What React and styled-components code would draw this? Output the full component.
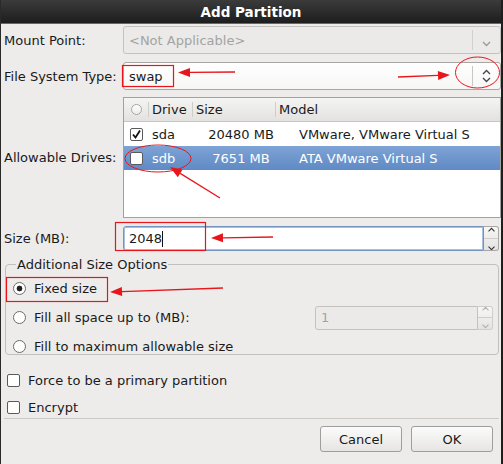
import React from 'react';
import styled, { createGlobalStyle } from 'styled-components';

const GlobalStyle = createGlobalStyle`
  html, body {
    margin: 0;
    padding: 0;
    background: #edeceb;
  }
  body {
    font-family: "DejaVu Sans", "Liberation Sans", sans-serif;
    font-size: 13px;
    color: #1a1a1a;
  }
`;

const drives = [
  { checked: true, drive: 'sda', size: '20480 MB', model: 'VMware, VMware Virtual S' },
  { checked: false, drive: 'sdb', size: '7651 MB', model: 'ATA VMware Virtual S', selected: true },
];

const Chevron = ({ up = true, down = true, color = '#444' }) => (
  <svg width="9" height="14" viewBox="0 0 9 14">
    {up && <path d="M1 5 L4.5 1.5 L8 5" fill="none" stroke={color} strokeWidth="1.3" />}
    {down && <path d="M1 9 L4.5 12.5 L8 9" fill="none" stroke={color} strokeWidth="1.3" />}
  </svg>
);

const Tick = () => (
  <svg width="11" height="11" viewBox="0 0 11 11">
    <path d="M2 5.5 L4.5 8.5 L9 1.5" fill="none" stroke="#111" strokeWidth="1.8" />
  </svg>
);

const Arrow = ({ x1, y1, x2, y2 }) => {
  const a = Math.atan2(y2 - y1, x2 - x1);
  const len = 12;
  const w = 4.5;
  const bx = x2 - len * Math.cos(a);
  const by = y2 - len * Math.sin(a);
  const px = -Math.sin(a) * w;
  const py = Math.cos(a) * w;
  return (
    <g>
      <line x1={x1} y1={y1} x2={bx} y2={by} stroke="#e8151b" strokeWidth="1.3" />
      <polygon points={`${x2},${y2} ${bx + px},${by + py} ${bx - px},${by - py}`} fill="#e8151b" />
    </g>
  );
};

const App = () => {
  return (
    <Window>
      <GlobalStyle />
      <TitleBar>Add Partition</TitleBar>
      <Body>
        <FormRow $top={2}>
          <Label>Mount Point:</Label>
          <Combo $disabled>
            <ComboText $disabled>&lt;Not Applicable&gt;</ComboText>
            <ComboButton $disabled>
              <Chevron up={false} color="#9a9a9a" />
            </ComboButton>
          </Combo>
        </FormRow>

        <FormRow $top={8}>
          <Label>File System Type:</Label>
          <Combo>
            <ComboText>swap</ComboText>
            <ComboButton>
              <Chevron />
            </ComboButton>
          </Combo>
        </FormRow>

        <FormRow $top={7}>
          <Label>Allowable Drives:</Label>
          <Table>
            <HeaderRow>
              <CheckCell>
                <RoundBox />
              </CheckCell>
              <HeadCell $w={44}>Drive</HeadCell>
              <HeadCell $w={83}>Size</HeadCell>
              <HeadCell $grow>Model</HeadCell>
            </HeaderRow>
            {drives.map((d) => (
              <DataRow key={d.drive} $selected={d.selected}>
                <CheckCell>
                  <CheckBox>{d.checked && <Tick />}</CheckBox>
                </CheckCell>
                <Cell $w={44} $pad={4}>{d.drive}</Cell>
                <Cell $w={83} $pad={15} $center>{d.size}</Cell>
                <Cell $grow $pad={24}>{d.model}</Cell>
              </DataRow>
            ))}
          </Table>
        </FormRow>

        <FormRow $top={8}>
          <Label>Size (MB):</Label>
          <SpinWrap>
            <SpinEntry $focus>
              2048<Caret />
            </SpinEntry>
            <SpinButtons>
              <SpinBtn><Chevron down={false} color="#333" /></SpinBtn>
              <SpinBtn><Chevron up={false} color="#333" /></SpinBtn>
            </SpinButtons>
          </SpinWrap>
        </FormRow>

        <Frame>
          <Legend>Additional Size Options</Legend>
          <OptionRow>
            <Radio $on />
            <OptionText>Fixed size</OptionText>
          </OptionRow>
          <OptionRow>
            <Radio />
            <OptionText>Fill all space up to (MB):</OptionText>
            <SmallSpin>
              <SpinEntry $disabled>1</SpinEntry>
              <SpinButtons $disabled>
                <SpinBtn><Chevron down={false} color="#b0b0b0" /></SpinBtn>
                <SpinBtn><Chevron up={false} color="#b0b0b0" /></SpinBtn>
              </SpinButtons>
            </SmallSpin>
          </OptionRow>
          <OptionRow>
            <Radio />
            <OptionText>Fill to maximum allowable size</OptionText>
          </OptionRow>
        </Frame>

        <CheckRow $top={16}>
          <CheckBox />
          <OptionText>Force to be a primary partition</OptionText>
        </CheckRow>
        <CheckRow $top={9}>
          <CheckBox />
          <OptionText>Encrypt</OptionText>
        </CheckRow>

        <Separator />

        <ButtonBar>
          <Button>Cancel</Button>
          <Button>OK</Button>
        </ButtonBar>
      </Body>

      <Annotations width="503" height="464" viewBox="0 0 503 464">
        <rect x="122.5" y="65.5" width="51" height="21" fill="none" stroke="#e8151b" strokeWidth="1.2" />
        <Arrow x1={235} y1={72} x2={178} y2={72.5} />
        <Arrow x1={398} y1={77} x2={450} y2={75} />
        <ellipse cx="477.5" cy="72.5" rx="22" ry="15.5" fill="none" stroke="#e8151b" strokeWidth="1" />
        <ellipse cx="158" cy="158.5" rx="33" ry="13.5" fill="none" stroke="#e8151b" strokeWidth="1" />
        <Arrow x1={220} y1={198} x2={170} y2={167} />
        <rect x="115.5" y="222.5" width="90" height="28" fill="none" stroke="#e8151b" strokeWidth="1.2" />
        <Arrow x1={273} y1={237} x2={211} y2={238} />
        <rect x="6.5" y="277.5" width="101" height="24" fill="none" stroke="#e8151b" strokeWidth="1.2" />
        <Arrow x1={223} y1={288} x2={110} y2={292} />
      </Annotations>
    </Window>
  );
};

export default App;

const Window = styled.div`
  position: relative;
  width: 503px;
  height: 464px;
  box-sizing: border-box;
  background: #edeceb;
  border-left: 1px solid #2a2a2a;
  border-right: 2px solid #1e1e1e;
  overflow: hidden;
`;

const TitleBar = styled.div`
  height: 23px;
  line-height: 24px;
  text-align: center;
  color: #fff;
  font-weight: bold;
  font-size: 13.5px;
  background: linear-gradient(#3b3b3b, #1d1d1d);
  border-bottom: 1px solid #5f6873;
`;

const Body = styled.div`
  display: flex;
  flex-direction: column;
  padding: 0 0 0 3px;
`;

const FormRow = styled.div`
  display: grid;
  grid-template-columns: 119px 1fr;
  align-items: center;
  margin-top: ${(p) => p.$top}px;
`;

const Label = styled.div`
  white-space: nowrap;
`;

const Combo = styled.div`
  display: flex;
  align-items: stretch;
  height: 26px;
  border: 1px solid ${(p) => (p.$disabled ? '#c4c2bf' : '#a9a7a4')};
  border-radius: 3px;
  background: ${(p) => (p.$disabled ? '#ebeae8' : 'linear-gradient(#ffffff, #f6f6f5)')};
`;

const ComboText = styled.div`
  flex: 1;
  display: flex;
  align-items: center;
  padding-left: 5px;
  color: ${(p) => (p.$disabled ? '#a3a3a3' : '#1a1a1a')};
`;

const ComboButton = styled.div`
  width: 27px;
  display: flex;
  align-items: center;
  justify-content: center;
  margin: 3px 0;
  border-left: 1px solid ${(p) => (p.$disabled ? '#d2d0cd' : '#c9c7c4')};
`;

const Table = styled.div`
  height: 119px;
  border: 1px solid #a3a19e;
  background: #fff;
  display: flex;
  flex-direction: column;
`;

const HeaderRow = styled.div`
  display: flex;
  height: 23px;
  background: linear-gradient(#f4f4f3, #e3e2e0);
  border-bottom: 1px solid #c8c6c3;
`;

const CheckCell = styled.div`
  width: 24px;
  display: flex;
  align-items: center;
  justify-content: center;
`;

const HeadCell = styled.div`
  display: flex;
  align-items: center;
  width: ${(p) => (p.$grow ? 'auto' : `${p.$w}px`)};
  flex: ${(p) => (p.$grow ? 1 : 'none')};
  padding-left: 3px;
  box-sizing: border-box;
  border-left: 1px solid #cfcdca;
  margin: 4px 0;
`;

const DataRow = styled.div`
  display: flex;
  height: 24px;
  color: ${(p) => (p.$selected ? '#fff' : '#1a1a1a')};
  background: ${(p) => (p.$selected ? 'linear-gradient(#7ea3d5, #5f8ac5)' : 'transparent')};
`;

const Cell = styled.div`
  display: flex;
  align-items: center;
  justify-content: ${(p) => (p.$center ? 'center' : 'flex-start')};
  width: ${(p) => (p.$grow ? 'auto' : `${p.$w}px`)};
  flex: ${(p) => (p.$grow ? 1 : 'none')};
  padding-left: ${(p) => p.$pad || 0}px;
  box-sizing: border-box;
  white-space: nowrap;
  overflow: ${(p) => (p.$grow ? 'hidden' : 'visible')};
`;

const RoundBox = styled.div`
  width: 9px;
  height: 9px;
  border: 1px solid #a8a6a3;
  border-radius: 50%;
  background: linear-gradient(#fff, #ececec);
`;

const CheckBox = styled.div`
  width: 11px;
  height: 11px;
  border: 1px solid #5a5a5a;
  border-radius: 2px;
  background: #fff;
  display: flex;
  align-items: center;
  justify-content: center;
  flex: none;
`;

const SpinWrap = styled.div`
  display: flex;
  height: 25px;
  margin-right: 2px;
`;

const SpinEntry = styled.div`
  flex: 1;
  display: flex;
  align-items: center;
  padding-left: 5px;
  border: 1px solid ${(p) => (p.$focus ? '#7393c1' : '#c4c2bf')};
  border-radius: 3px 0 0 3px;
  background: ${(p) => (p.$disabled ? '#ebeae8' : '#fff')};
  color: ${(p) => (p.$disabled ? '#a3a3a3' : '#1a1a1a')};
  box-shadow: ${(p) => (p.$focus ? 'inset 0 0 0 1px #a9c0e0' : 'none')};
`;

const Caret = styled.span`
  display: inline-block;
  width: 1px;
  height: 16px;
  background: #111;
`;

const SpinButtons = styled.div`
  width: 14px;
  display: flex;
  flex-direction: column;
  border: 1px solid ${(p) => (p.$disabled ? '#cfcdca' : '#a9a7a4')};
  border-left: none;
  border-radius: 0 3px 3px 0;
  background: linear-gradient(#f7f7f6, #e4e3e1);
`;

const SpinBtn = styled.div`
  flex: 1;
  display: flex;
  align-items: center;
  justify-content: center;
  overflow: hidden;
  & + & {
    border-top: 1px solid #cfcdca;
  }
  svg {
    transform: scale(0.85);
  }
`;

const Frame = styled.fieldset`
  margin: 6px 2px 0 1px;
  padding: 2px 0 8px 7px;
  border: 1px solid #c2c0bd;
  border-radius: 4px;
  height: 86px;
  display: flex;
  flex-direction: column;
`;

const Legend = styled.legend`
  padding: 0 1px;
  margin-left: 3px;
`;

const OptionRow = styled.div`
  display: flex;
  align-items: center;
  height: 29px;
`;

const Radio = styled.div`
  width: 11px;
  height: 11px;
  border: 1px solid #6c6c6c;
  border-radius: 50%;
  background: ${(p) =>
    p.$on ? 'radial-gradient(circle, #222 0 2.6px, #fff 3.2px)' : '#fff'};
  margin-right: 8px;
  flex: none;
`;

const OptionText = styled.div`
  white-space: nowrap;
`;

const SmallSpin = styled.div`
  display: flex;
  height: 24px;
  width: 178px;
  margin-left: auto;
  margin-right: 5px;
`;

const CheckRow = styled.div`
  display: flex;
  align-items: center;
  gap: 8px;
  margin-top: ${(p) => p.$top}px;
  height: 18px;
  padding-left: 3px;
`;

const Separator = styled.div`
  height: 1px;
  background: #cbc9c6;
  margin: 2px 2px 0 0;
`;

const ButtonBar = styled.div`
  display: flex;
  justify-content: flex-end;
  gap: 9px;
  margin-top: 7px;
  padding-right: 8px;
`;

const Button = styled.div`
  width: 82px;
  height: 26px;
  box-sizing: border-box;
  display: flex;
  align-items: center;
  justify-content: center;
  border: 1px solid #a09e9b;
  border-radius: 3px;
  background: linear-gradient(#fbfbfb, #e6e5e3);
`;

const Annotations = styled.svg`
  position: absolute;
  left: -1px;
  top: 0;
  pointer-events: none;
`;
